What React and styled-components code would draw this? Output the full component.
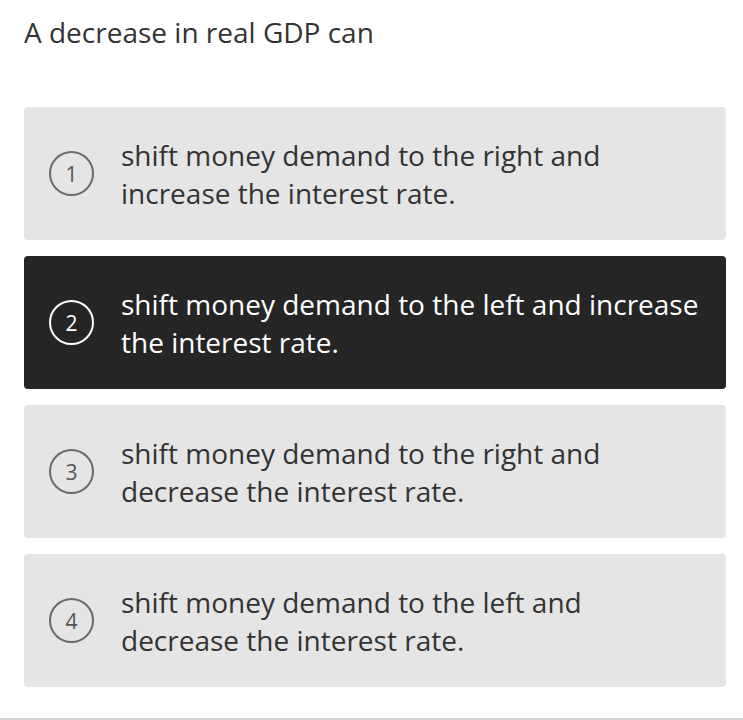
import React from "react";
import styled, { createGlobalStyle } from "styled-components";

const GlobalStyle = createGlobalStyle`
  html, body {
    margin: 0;
    padding: 0;
    background: #ffffff;
  }
  body {
    font-family: "Open Sans", "Noto Sans", sans-serif;
  }
`;

const Page = styled.div`
  width: 743px;
  height: 720px;
  box-sizing: border-box;
  padding: 0 17px 0 24px;
  border-bottom: 2px solid #d4d4d4;
  display: flex;
  flex-direction: column;
`;

const Question = styled.h1`
  margin: 0;
  padding-top: 12px;
  font-size: 28px;
  font-weight: 400;
  line-height: 40px;
  color: #333333;
`;

const Options = styled.div`
  display: flex;
  flex-direction: column;
  gap: 16px;
  margin-top: 55px;
`;

const Option = styled.div`
  display: flex;
  align-items: center;
  height: 133px;
  box-sizing: border-box;
  padding: 0 24px 0 25px;
  border-radius: 4px;
  background: ${(p) => (p.selected ? "#252525" : "#e5e5e5")};
  color: ${(p) => (p.selected ? "#ffffff" : "#333333")};
  cursor: pointer;
`;

const Badge = styled.span`
  flex: none;
  width: 45px;
  height: 45px;
  box-sizing: border-box;
  border: 2px solid ${(p) => (p.selected ? "#ffffff" : "#6b6b6b")};
  border-radius: 50%;
  display: flex;
  align-items: center;
  justify-content: center;
  font-size: 21px;
  color: ${(p) => (p.selected ? "#ffffff" : "#555555")};
`;

const Label = styled.span`
  margin-left: 27px;
  font-size: 28px;
  line-height: 38px;
`;

const answers = [
  "shift money demand to the right and increase the interest rate.",
  "shift money demand to the left and increase the interest rate.",
  "shift money demand to the right and decrease the interest rate.",
  "shift money demand to the left and decrease the interest rate.",
];

export default function App() {
  const selected = 1;
  return (
    <>
      <GlobalStyle />
      <Page>
        <Question>A decrease in real GDP can</Question>
        <Options>
          {answers.map((text, i) => (
            <Option key={i} selected={i === selected}>
              <Badge selected={i === selected}>{i + 1}</Badge>
              <Label>{text}</Label>
            </Option>
          ))}
        </Options>
      </Page>
    </>
  );
}
